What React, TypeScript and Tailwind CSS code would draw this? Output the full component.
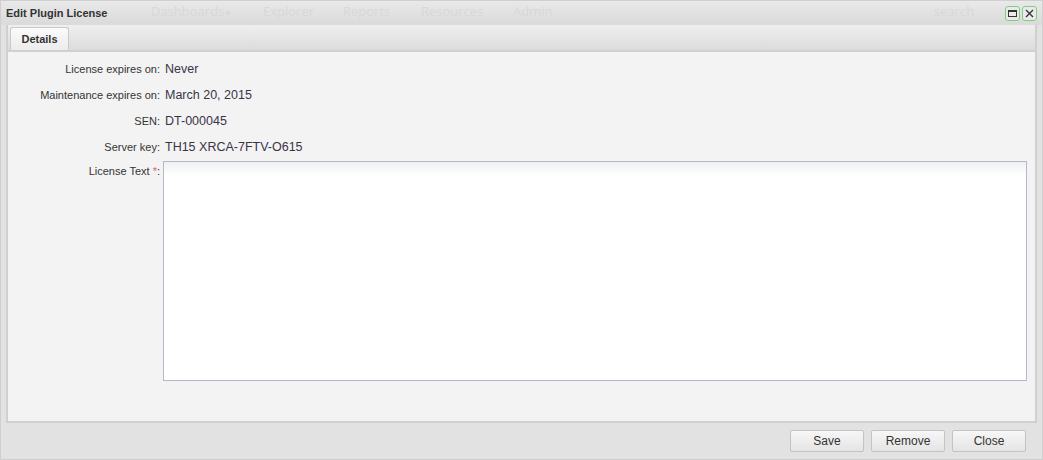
import React from "react";

const fields = [
  { label: "License expires on:", value: "Never" },
  { label: "Maintenance expires on:", value: "March 20, 2015" },
  { label: "SEN:", value: "DT-000045" },
  { label: "Server key:", value: "TH15 XRCA-7FTV-O615" },
];

// faint menu of the page behind the window, showing through the header
const ghostMenu = [
  { text: "Dashboards", x: "left-[150px]", caret: true },
  { text: "Explorer", x: "left-[262px]" },
  { text: "Reports", x: "left-[342px]" },
  { text: "Resources", x: "left-[420px]" },
  { text: "Admin", x: "left-[512px]" },
  { text: "search", x: "left-[933px]" },
];

const ToolButton: React.FC<{ kind: "max" | "close" }> = ({ kind }) => (
  <div className="w-[15px] h-[15px] rounded-[3px] border border-[#7fd07a] bg-[#eaeaea] flex items-center justify-center">
    {kind === "max" ? (
      <svg width="11" height="11" viewBox="0 0 11 11">
        <rect x="1.5" y="2.5" width="8" height="6" fill="none" stroke="#333" strokeWidth="1" />
        <rect x="1.5" y="2.5" width="8" height="1.5" fill="#333" />
      </svg>
    ) : (
      <svg width="11" height="11" viewBox="0 0 11 11">
        <path d="M2 2 L9 9 M9 2 L2 9" stroke="#333" strokeWidth="1.4" />
      </svg>
    )}
  </div>
);

const FooterButton: React.FC<{ children: React.ReactNode }> = ({ children }) => (
  <button className="w-[74px] h-[22px] rounded-[2px] border border-[#c4c4c4] bg-gradient-to-b from-[#f7f7f7] to-[#e4e4e4] text-[12px] text-[#333] font-['Liberation_Sans',Arial,sans-serif]">
    {children}
  </button>
);

export default function App() {
  return (
    <div className="w-[1043px] h-[460px] bg-[#e2e2e2] border border-[#cfcfcf] flex flex-col overflow-hidden font-['Liberation_Sans',Arial,sans-serif]">
      {/* header */}
      <div className="relative h-[24px] shrink-0 bg-gradient-to-b from-[#e9e9e9] to-[#dadada] flex items-center">
        <div className="absolute inset-0 text-[13px] text-[#d8d8d8] font-['Open_Sans',sans-serif] pointer-events-none">
          {ghostMenu.map((m) => (
            <span key={m.text} className={`absolute top-[1px] ${m.x}`}>
              {m.text}
              {m.caret && <span className="text-[8px] align-middle">▼</span>}
            </span>
          ))}
        </div>
        <span className="relative ml-[5px] text-[11px] font-bold text-[#333]">Edit Plugin License</span>
        <div className="relative ml-auto mr-[5px] flex gap-[2px]">
          <ToolButton kind="max" />
          <ToolButton kind="close" />
        </div>
      </div>

      {/* body panel */}
      <div className="mx-[5px] h-[398px] shrink-0 border-2 border-[#d0d0d0] border-t-0 bg-[#f3f3f3] flex flex-col">
        <div className="h-[27px] shrink-0 bg-gradient-to-b from-[#efefef] to-[#dcdcdc] border-b-2 border-[#d0d0d0] flex items-end pl-[2px]">
          <div className="h-[23px] w-[59px] rounded-t-[3px] border border-b-0 border-[#c9c9c9] bg-gradient-to-b from-[#fbfbfb] to-[#ececec] flex items-center justify-center text-[11px] font-bold text-[#333]">
            Details
          </div>
        </div>
        <div className="flex-1 flex flex-col pt-[4px] pr-[8px]">
          {fields.map((f) => (
            <div key={f.label} className="flex items-center h-[26px]">
              <div className="w-[155px] pr-[3px] text-right text-[11px] text-[#333]">{f.label}</div>
              <div className="ml-[2px] text-[12.5px] text-[#3a3348]">{f.value}</div>
            </div>
          ))}
          <div className="flex mt-[1px]">
            <div className="w-[155px] pr-[3px] pt-[2px] text-right text-[11px] text-[#333]">
              License Text <span className="text-[#e85a5a]">*</span>:
            </div>
            <textarea className="w-[864px] h-[220px] border border-[#b5b8c8] bg-gradient-to-b from-[#eef0f2] via-white via-[6%] to-white resize-none outline-none" />
          </div>
        </div>
      </div>

      {/* footer */}
      <div className="flex-1 flex items-center justify-end gap-[7px] pr-[16px]">
        <FooterButton>Save</FooterButton>
        <FooterButton>Remove</FooterButton>
        <FooterButton>Close</FooterButton>
      </div>
    </div>
  );
}
